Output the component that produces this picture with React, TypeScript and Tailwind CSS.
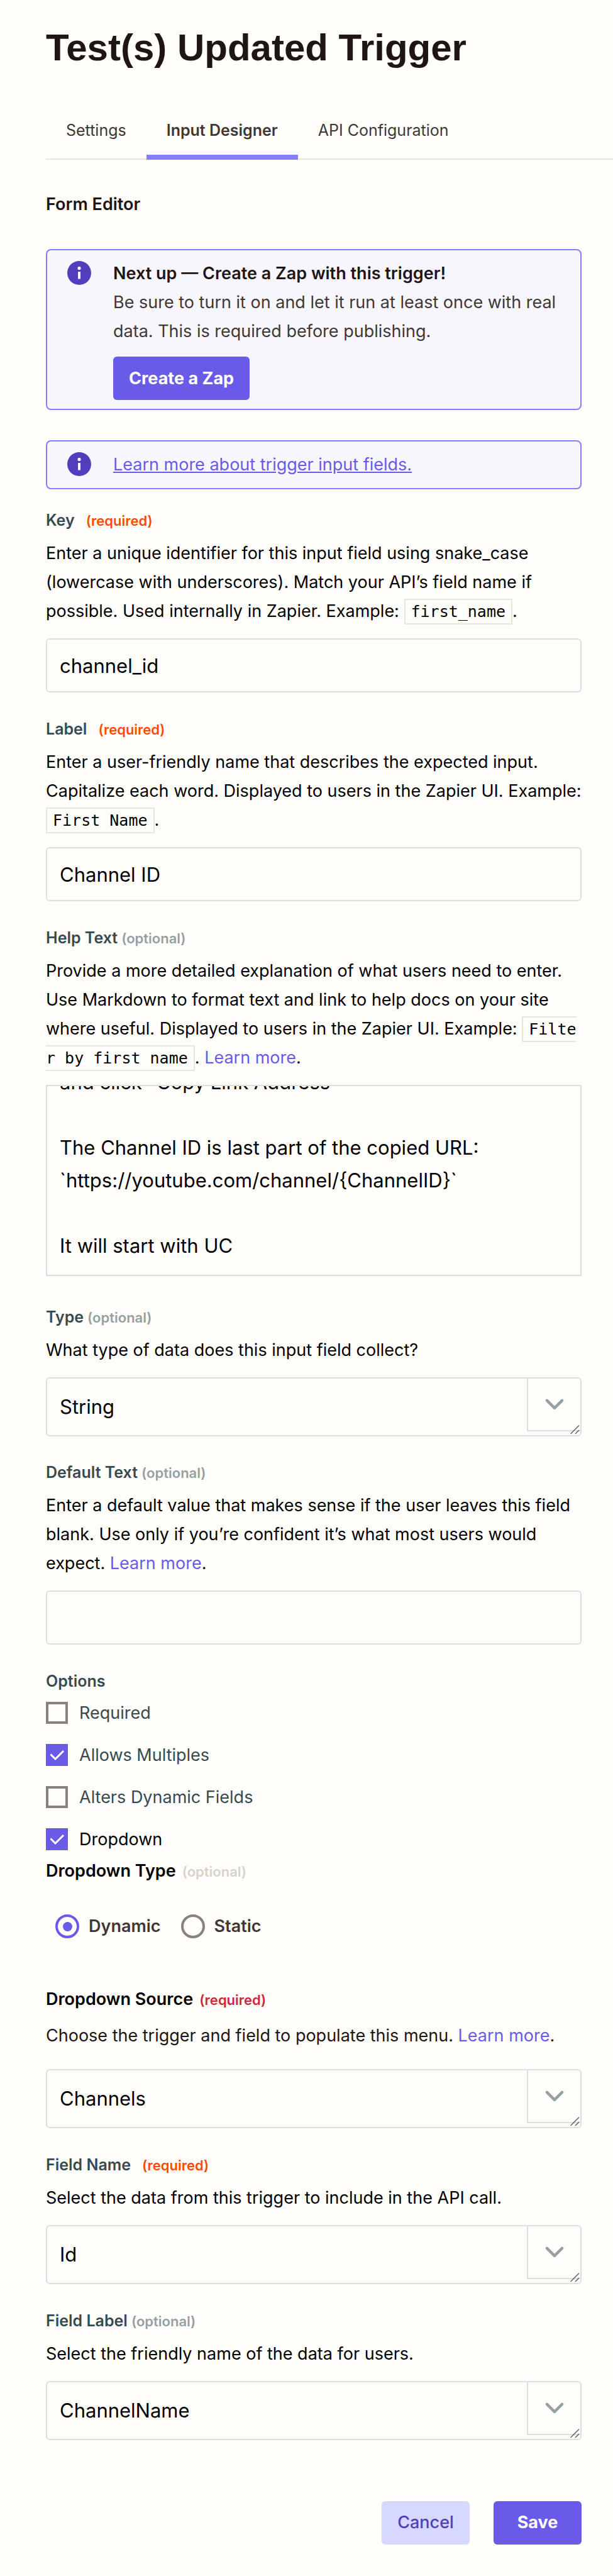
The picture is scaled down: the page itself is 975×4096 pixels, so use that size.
import { useLayoutEffect, useRef } from "react";
import type { ReactNode } from "react";

const helpText = `and click "Copy Link Address"

The Channel ID is last part of the copied URL:
\`https://youtube.com/channel/{ChannelID}\`

It will start with UC`;

function InfoIcon() {
  return (
    <svg viewBox="0 0 40 40" className="mt-[3px] size-[38px] shrink-0" aria-hidden="true">
      <circle cx="20" cy="20" r="20" fill="#503ebd" />
      <circle cx="20" cy="12" r="2.7" fill="#fff" />
      <rect x="18" y="18" width="4" height="12" fill="#fff" />
    </svg>
  );
}

function Notice({ children }: { children: ReactNode }) {
  return (
    <div className="flex gap-[35px] rounded-lg border-2 border-[#857dff] bg-[#f7f6fd] px-8 py-[14px]">
      <InfoIcon />
      <div className="min-w-0 flex-1 leading-[46px]">{children}</div>
    </div>
  );
}

function FieldLabel({ htmlFor, note, children }: { htmlFor?: string; note?: "required" | "optional"; children: ReactNode }) {
  return (
    <label htmlFor={htmlFor} className="mb-[15px] block text-[25px] leading-[30px] font-semibold text-[#354a52]">
      {children}
      {note === "required" && <span className="ml-[18px] text-[22px] leading-none text-[#ff4a00]">(required)</span>}
      {note === "optional" && <span className="ml-1.5 text-[22px] leading-none text-[#95a0a5]">(optional)</span>}
    </label>
  );
}

function Description({ children }: { children: ReactNode }) {
  return <p className="mb-5 leading-[46px] text-black">{children}</p>;
}

function Code({ children }: { children: ReactNode }) {
  return (
    <code className="border-2 border-[#e8e7de] px-[9px] py-1 font-['DejaVu_Sans_Mono',monospace] text-[25px] leading-none break-all">
      {children}
    </code>
  );
}

function Learn() {
  return (
    <a href="#learn" className="text-[#695be8]">
      Learn more
    </a>
  );
}

function TextInput({ id, value }: { id: string; value: string }) {
  return (
    <input
      id={id}
      type="text"
      defaultValue={value}
      className="block h-[86px] w-full rounded-md border-2 border-[#d9dfe2] bg-transparent px-5 text-[31px] text-black"
    />
  );
}

function SelectInput({ id, value }: { id: string; value: string }) {
  return (
    <div className="relative">
      <select
        id={id}
        defaultValue={value}
        className="block h-[94px] w-full appearance-none rounded-md border-2 border-[#d9dfe2] bg-transparent px-5 text-[31px] text-black"
      >
        <option>{value}</option>
      </select>
      <span className="pointer-events-none absolute top-0.5 right-0.5 bottom-2 flex w-[85px] items-center justify-center border-b-2 border-l-2 border-[#d9dfe2]">
        <svg
          viewBox="0 0 30 18"
          className="h-[18px] w-[30px]"
          fill="none"
          stroke="#95a0a5"
          strokeWidth="4.5"
          strokeLinecap="round"
          strokeLinejoin="round"
          aria-hidden="true"
        >
          <path d="M3 2.8l12 12 12-12" />
        </svg>
      </span>
      <svg
        viewBox="0 0 16 16"
        className="pointer-events-none absolute right-0.5 bottom-0.5 size-4"
        stroke="#5c5c5c"
        strokeWidth="1.4"
        aria-hidden="true"
      >
        <path d="M.5 14L14 .5M8 14l6-6" />
      </svg>
    </div>
  );
}

function Checkbox({ id, label, checked = false, dark = false }: { id: string; label: string; checked?: boolean; dark?: boolean }) {
  return (
    <div className="flex items-center gap-[18px] leading-[35px]">
      <span className="grid size-[35px] shrink-0 place-items-center">
        <input
          id={id}
          type="checkbox"
          defaultChecked={checked}
          className="peer col-start-1 row-start-1 size-[35px] appearance-none border-4 border-[#88827e] checked:border-[#695be8] checked:bg-[#695be8]"
        />
        <svg
          viewBox="0 0 35 35"
          className="pointer-events-none col-start-1 row-start-1 hidden size-[35px] peer-checked:block"
          fill="none"
          stroke="#fff"
          strokeWidth="3"
          aria-hidden="true"
        >
          <path d="M7.5 16.5l7.5 7.5L28 11" />
        </svg>
      </span>
      <label htmlFor={id} className={dark ? "text-black" : "text-[#354a52]"}>
        {label}
      </label>
    </div>
  );
}

function Radio({ id, label, checked = false }: { id: string; label: string; checked?: boolean }) {
  return (
    <div className="flex items-center gap-[15px]">
      <span className="grid size-[38px] shrink-0 place-items-center">
        <input
          id={id}
          type="radio"
          name="dropdown-type"
          defaultChecked={checked}
          className="peer col-start-1 row-start-1 size-[38px] appearance-none rounded-full border-4 border-[#88827e] checked:border-[#695be8]"
        />
        <span className="pointer-events-none col-start-1 row-start-1 hidden size-[15px] rounded-full bg-[#695be8] peer-checked:block" />
      </span>
      <label htmlFor={id} className="leading-[38px] font-semibold text-[#413735]">
        {label}
      </label>
    </div>
  );
}

export default function App() {
  const helpRef = useRef<HTMLTextAreaElement>(null);

  useLayoutEffect(() => {
    const el = helpRef.current;
    if (el) el.scrollTop = el.scrollHeight;
  }, []);

  return (
    <div className="min-h-screen bg-[#fffdf9] pb-[50px] pl-[73px] font-['Inter',sans-serif] text-[27px] text-[#201515]">
      <h1 className="pt-10 font-['Liberation_Sans',sans-serif] text-[60px] leading-[72px] font-bold">Test(s) Updated Trigger</h1>

      <nav className="mt-14 flex border-b-2 border-[#e8e7de] text-[25px] leading-[30px] text-[#413735]">
        <a href="#settings" className="px-8 pt-6 pb-[30px]">
          Settings
        </a>
        <a href="#input-designer" aria-current="page" className="-mb-0.5 border-b-8 border-[#857dff] px-8 pt-6 pb-6 font-semibold">
          Input Designer
        </a>
        <a href="#api-configuration" className="px-8 pt-6 pb-[30px]">
          API Configuration
        </a>
      </nav>

      <main className="pr-[50px]">
        <h2 className="mt-12 leading-[46px] font-semibold">Form Editor</h2>

        <div className="mt-12">
          <Notice>
            <h3 className="font-semibold">Next up — Create a Zap with this trigger!</h3>
            <p className="text-[#413735]">
              Be sure to turn it on and let it run at least once with real data. This is required before publishing.
            </p>
            <button type="button" className="mt-[17px] block h-[69px] rounded-md bg-[#695be8] px-[25px] font-bold text-white">
              Create a Zap
            </button>
          </Notice>
        </div>

        <div className="mt-12">
          <Notice>
            <a href="#input-fields" className="text-[#695be8] underline">
              Learn more about trigger input fields.
            </a>
          </Notice>
        </div>

        <form className="mt-[34px]" onSubmit={(e) => e.preventDefault()}>
          <div>
            <FieldLabel htmlFor="key" note="required">Key</FieldLabel>
            <Description>
              Enter a unique identifier for this input field using snake_case (lowercase with underscores). Match your API’s
              field name if possible. Used internally in Zapier. Example: <Code>first_name</Code>.
            </Description>
            <TextInput id="key" value="channel_id" />
          </div>

          <div className="mt-[43px]">
            <FieldLabel htmlFor="label" note="required">Label</FieldLabel>
            <Description>
              Enter a user-friendly name that describes the expected input. Capitalize each word. Displayed to users in the
              Zapier UI. Example: <Code>First Name</Code>.
            </Description>
            <TextInput id="label" value="Channel ID" />
          </div>

          <div className="mt-[43px]">
            <FieldLabel htmlFor="help" note="optional">Help Text</FieldLabel>
            <Description>
              Provide a more detailed explanation of what users need to enter. Use Markdown to format text and link to help
              docs on your site where useful. Displayed to users in the Zapier UI. Example:{" "}
              <Code>Filter by first name</Code>. <Learn />.
            </Description>
            <textarea
              id="help"
              ref={helpRef}
              defaultValue={helpText}
              className="block h-[304px] w-full resize-none [scrollbar-width:none] border-2 border-[#d9dfe2] bg-transparent p-5 text-[31px] leading-[52px] text-black"
            />
          </div>

          <div className="mt-[50px]">
            <FieldLabel htmlFor="type" note="optional">Type</FieldLabel>
            <Description>What type of data does this input field collect?</Description>
            <SelectInput id="type" value="String" />
          </div>

          <div className="mt-[42px]">
            <FieldLabel htmlFor="default" note="optional">Default Text</FieldLabel>
            <Description>
              Enter a default value that makes sense if the user leaves this field blank. Use only if you’re confident it’s
              what most users would expect. <Learn />.
            </Description>
            <TextInput id="default" value="" />
          </div>

          <fieldset className="mt-[43px]">
            <legend className="mb-[18px] text-[25px] leading-[30px] font-semibold text-[#354a52]">Options</legend>
            <div className="flex flex-col gap-8">
              <Checkbox id="required" label="Required" />
              <Checkbox id="multiples" label="Allows Multiples" checked />
              <Checkbox id="alters" label="Alters Dynamic Fields" />
              <Checkbox id="dropdown" label="Dropdown" checked dark />
            </div>
          </fieldset>

          <fieldset className="mt-[10px]">
            <legend className="leading-[46px] font-semibold text-black">
              Dropdown Type<span className="ml-2.5 text-[22px] leading-none text-[#d7d3c9]">(optional)</span>
            </legend>
            <div className="mt-[46px] flex gap-8 pl-[15px]">
              <Radio id="dynamic" label="Dynamic" checked />
              <Radio id="static" label="Static" />
            </div>
          </fieldset>

          <div className="mt-[74px]">
            <label htmlFor="source" className="mb-3 block leading-[46px] font-semibold text-black">
              Dropdown Source<span className="ml-2.5 text-[22px] leading-none text-[#d0273d]">(required)</span>
            </label>
            <p className="mb-[30px] leading-[46px]">
              Choose the trigger and field to populate this menu. <Learn />.
            </p>
            <SelectInput id="source" value="Channels" />
          </div>

          <div className="mt-[43px]">
            <FieldLabel htmlFor="field-name" note="required">Field Name</FieldLabel>
            <Description>Select the data from this trigger to include in the API call.</Description>
            <SelectInput id="field-name" value="Id" />
          </div>

          <div className="mt-[43px]">
            <FieldLabel htmlFor="field-label" note="optional">Field Label</FieldLabel>
            <Description>Select the friendly name of the data for users.</Description>
            <SelectInput id="field-label" value="ChannelName" />
          </div>

          <div className="mt-[97px] flex justify-end gap-[38px]">
            <button type="button" className="h-[69px] min-w-[140px] rounded-md bg-[#d6d8ff] px-6 font-medium text-[#503ebd]">
              Cancel
            </button>
            <button type="submit" className="h-[69px] min-w-[140px] rounded-md bg-[#695be8] px-6 font-bold text-white">
              Save
            </button>
          </div>
        </form>
      </main>
    </div>
  );
}
